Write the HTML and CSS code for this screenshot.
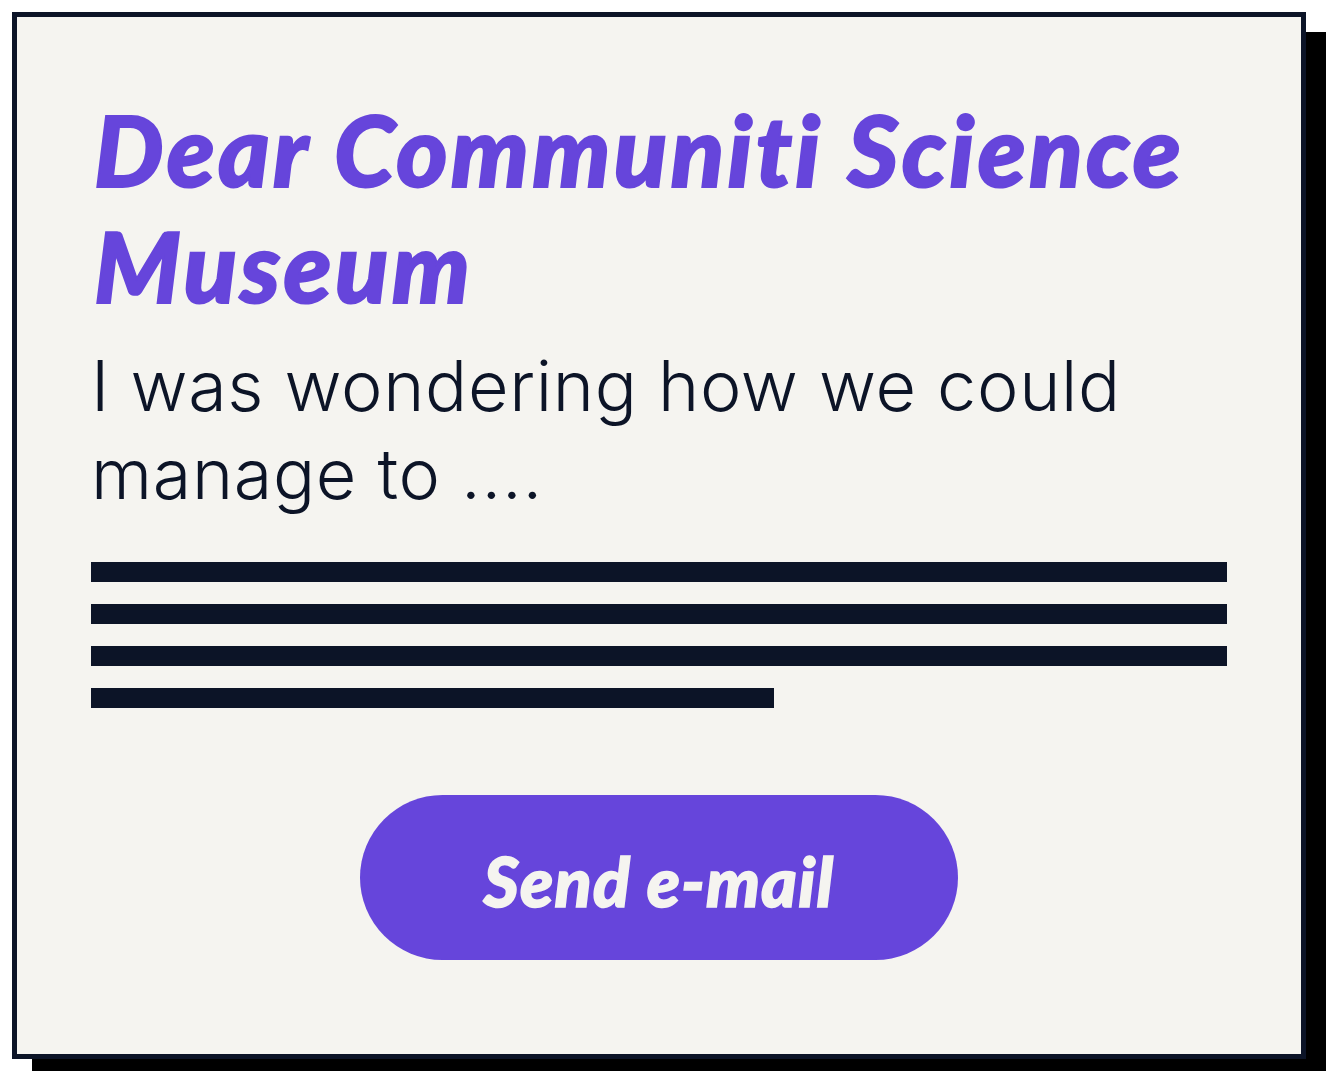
FILE: index.html
```html
<!DOCTYPE html>
<html>
<head>
<meta charset="utf-8">
<link rel="stylesheet" href="styles.css">
</head>
<body>
<div class="page">
  <div class="card">
    <h1 class="title">Dear Communiti Science Museum</h1>
    <p class="lead">I was wondering how we could manage to ....</p>
    <div class="lines">
      <div class="line"></div>
      <div class="line"></div>
      <div class="line"></div>
      <div class="line short"></div>
    </div>
    <div class="actions">
      <button class="send">Send e-mail</button>
    </div>
  </div>
</div>
</body>
</html>
```

FILE: styles.css
```css
html, body {
  margin: 0;
  padding: 0;
  background: #ffffff;
}
.page {
  padding: 12px;
}
.card {
  box-sizing: border-box;
  width: 1294px;
  height: 1047px;
  background: #f5f4f0;
  border: 5px solid #0c1427;
  box-shadow: 20px 20px 0 #000000;
  padding: 74px 74px 0 74px;
  display: flex;
  flex-direction: column;
}
.title {
  margin: 0 0 0 3px;
  font-family: Lato, sans-serif;
  font-style: italic;
  font-weight: 900;
  font-size: 98px;
  line-height: 116px;
  letter-spacing: 3.4px;
  font-variant-ligatures: none;
  -webkit-text-stroke: 2px #6645db;
  color: #6645db;
}
.lead {
  margin: 19px 0 0 0;
  font-family: Inter, sans-serif;
  font-weight: 300;
  font-size: 70px;
  line-height: 88px;
  letter-spacing: 0.7px;
  color: #0c1427;
}
.lines {
  margin-top: 44px;
  display: flex;
  flex-direction: column;
  gap: 22px;
}
.line {
  height: 20px;
  width: 1136px;
  background: #0c1427;
}
.line.short {
  width: 683px;
}
.actions {
  display: flex;
  justify-content: center;
  margin-top: 87px;
}
.send {
  width: 598px;
  height: 165px;
  padding: 6px 0 0 0;
  border: none;
  border-radius: 83px;
  background: #6645db;
  color: #f5f4f0;
  font-family: Lato, sans-serif;
  font-style: italic;
  font-weight: 900;
  font-size: 68px;
  letter-spacing: 1.2px;
  font-variant-ligatures: none;
  -webkit-text-stroke: 1.5px #f5f4f0;
  cursor: pointer;
}
```
